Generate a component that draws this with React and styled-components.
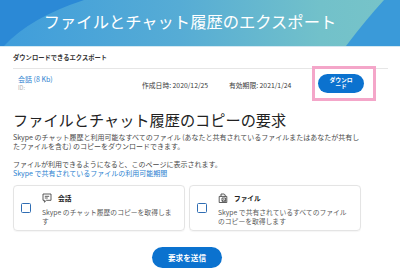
import React from 'react';
import styled, { createGlobalStyle } from 'styled-components';

const Global = createGlobalStyle`
  html, body { margin: 0; padding: 0; background: #fff; }
  body { font-family: "Noto Sans CJK JP", "Noto Sans", sans-serif; color: #333; }
  * { box-sizing: border-box; }
`;

const Page = styled.div`
  width: 400px;
  height: 273px;
  overflow: hidden;
  background: #fff;
`;

const Header = styled.header`
  position: relative;
  height: 47px;
  display: flex;
  align-items: center;
  justify-content: center;
  padding: 0 23px 4px 3px;
  overflow: hidden;
  border-bottom: 1px solid #d4e9f2;
`;

const HeaderArt = styled.svg`
  position: absolute;
  inset: 0;
  width: 100%;
  height: 100%;
`;

const HeaderTitle = styled.h1`
  position: relative;
  margin: 0;
  font-size: 16.3px;
  font-weight: 400;
  line-height: 1;
  color: #fff;
`;

const Main = styled.main`
  padding: 0 39px 0 13px;
`;

const SectionLabel = styled.div`
  margin-top: 7px;
  font-size: 6.3px;
  font-weight: 700;
  line-height: 8px;
  color: #333;
`;

const ExportRow = styled.div`
  margin-top: 6px;
  margin-right: -27px;
  height: 32px;
  border-top: 1px solid #e6e6e6;
  display: grid;
  grid-template-columns: 124px 87px 83px auto;
  align-items: center;
  padding-left: 5px;
`;

const NameCol = styled.div`
  display: flex;
  flex-direction: column;
  line-height: 9px;
  margin-top: -2px;
`;

const ExportName = styled.span`
  font-size: 7px;
  color: #2a7fd0;
`;

const ExportId = styled.span`
  font-size: 5.5px;
  color: #b0b0b0;
`;

const DateText = styled.span`
  font-size: 6.8px;
  color: #3a3a3a;
  white-space: nowrap;
`;

const Highlight = styled.div`
  position: relative;
  margin-left: 6px;
  margin-top: -3px;
  width: 46px;
  &::after {
    content: "";
    position: absolute;
    top: -8px;
    left: -6px;
    right: -12px;
    bottom: -8px;
    border: 3px solid #f4a6c9;
    pointer-events: none;
  }
`;

const DownloadButton = styled.button`
  width: 46px;
  height: 19px;
  border: none;
  border-radius: 10px;
  background: #0b72cf;
  color: #fff;
  font-family: inherit;
  font-size: 5.8px;
  font-weight: 700;
  line-height: 6.5px;
  padding: 0 9px;
  text-align: center;
  display: flex;
  align-items: center;
  justify-content: center;
`;

const Heading = styled.h2`
  margin: 9px 0 0;
  font-size: 15.2px;
  font-weight: 400;
  line-height: 20px;
  color: #222;
  white-space: nowrap;
`;

const Description = styled.p`
  margin: ${p => p.$top}px 0 0;
  max-width: 351px;
  font-size: 7px;
  line-height: ${p => p.$lh}px;
  color: #4a4a4a;
`;

const Link = styled.a`
  display: block;
  font-size: 7px;
  line-height: 9px;
  color: #2a7fd0;
  text-decoration: none;
`;

const Cards = styled.div`
  margin-top: 7px;
  width: 348px;
  display: grid;
  grid-template-columns: 1fr 1fr;
  gap: 4px;
`;

const Card = styled.div`
  height: 46.5px;
  border: 1px solid #e4e4e4;
  border-radius: 4px;
  box-shadow: 0 0.5px 1px rgba(0, 0, 0, 0.04);
  display: flex;
  align-items: center;
  padding: 0 10px 0 7px;
`;

const Checkbox = styled.span`
  flex: none;
  width: 10px;
  height: 10px;
  border: 1.4px solid #2f6db3;
  border-radius: 1.5px;
  margin-right: 11px;
`;

const CardBody = styled.div`
  flex: 1;
  margin-top: 3px;
`;

const CardTitleRow = styled.div`
  display: flex;
  align-items: center;
  gap: 6px;
  height: 10px;
`;

const CardTitle = styled.span`
  font-size: 6.7px;
  font-weight: 700;
  color: #222;
`;

const CardDesc = styled.div`
  margin-top: 5px;
  font-size: 6.8px;
  line-height: 8.4px;
  color: #5a5a5a;
`;

const SubmitRow = styled.div`
  width: 348px;
  margin-top: 16px;
  display: flex;
  justify-content: center;
`;

const SubmitButton = styled.button`
  width: 70px;
  height: 21px;
  border: none;
  border-radius: 11px;
  background: #0b72cf;
  color: #fff;
  font-family: inherit;
  font-size: 7.6px;
  font-weight: 700;
  padding: 0;
`;

const ChatIcon = () => (
  <svg width="10" height="10" viewBox="0 0 10 10" fill="none" stroke="#333" strokeWidth="0.8">
    <path d="M1 1h8v6.3H4.4L2.4 9.2V7.3H1z" strokeLinejoin="round" />
    <path d="M2.8 3.3h4.4M2.8 5h3" />
  </svg>
);

const FileIcon = () => (
  <svg width="10" height="10" viewBox="0 0 10 10" fill="none" stroke="#333" strokeWidth="0.8">
    <path d="M1.2 3.4h7.6v6.1H1.2z" />
    <path d="M3 3.4V1h3.2l1 1v1.4" />
    <path d="M4 5h3.6v3.3H4z" />
    <path d="M4.3 8l1.4-1.5 1.6 1.5" />
  </svg>
);

export default function App() {
  return (
    <Page>
      <Global />
      <Header>
        <HeaderArt viewBox="0 0 400 47" preserveAspectRatio="none">
          <defs>
            <linearGradient id="hg" x1="0" y1="0" x2="1" y2="0">
              <stop offset="0" stopColor="#3f9ddb" />
              <stop offset="0.45" stopColor="#56acd5" />
              <stop offset="0.8" stopColor="#72c1ca" />
              <stop offset="1" stopColor="#78c4c8" />
            </linearGradient>
          </defs>
          <rect x="0" y="0" width="400" height="47" fill="url(#hg)" />
          <path d="M0 0H84Q30 18 4 47H0Z" fill="#2b89d6" />
          <path d="M384 0H400V47H346Q366 20 384 0Z" fill="#3a9ad9" />
        </HeaderArt>
        <HeaderTitle>ファイルとチャット履歴のエクスポート</HeaderTitle>
      </Header>
      <Main>
        <SectionLabel>ダウンロードできるエクスポート</SectionLabel>
        <ExportRow>
          <NameCol>
            <ExportName>会話 (8 Kb)</ExportName>
            <ExportId>ID:</ExportId>
          </NameCol>
          <DateText>作成日時: 2020/12/25</DateText>
          <DateText>有効期限: 2021/1/24</DateText>
          <Highlight>
            <DownloadButton>ダウンロード</DownloadButton>
          </Highlight>
        </ExportRow>
        <Heading>ファイルとチャット履歴のコピーの要求</Heading>
        <Description $top={3.5} $lh={9.5}>
          Skype のチャット履歴と利用可能なすべてのファイル (あなたと共有されているファイルまたはあなたが共有したファイルを含む) のコピーをダウンロードできます。
        </Description>
        <Description $top={8} $lh={9}>
          ファイルが利用できるようになると、このページに表示されます。
          <Link href="#">Skype で共有されているファイルの利用可能期間</Link>
        </Description>
        <Cards>
          <Card>
            <Checkbox />
            <CardBody>
              <CardTitleRow>
                <ChatIcon />
                <CardTitle>会話</CardTitle>
              </CardTitleRow>
              <CardDesc>Skype のチャット履歴のコピーを取得します</CardDesc>
            </CardBody>
          </Card>
          <Card>
            <Checkbox />
            <CardBody>
              <CardTitleRow>
                <FileIcon />
                <CardTitle>ファイル</CardTitle>
              </CardTitleRow>
              <CardDesc>Skype で共有されているすべてのファイルのコピーを取得します</CardDesc>
            </CardBody>
          </Card>
        </Cards>
        <SubmitRow>
          <SubmitButton>要求を送信</SubmitButton>
        </SubmitRow>
      </Main>
    </Page>
  );
}
